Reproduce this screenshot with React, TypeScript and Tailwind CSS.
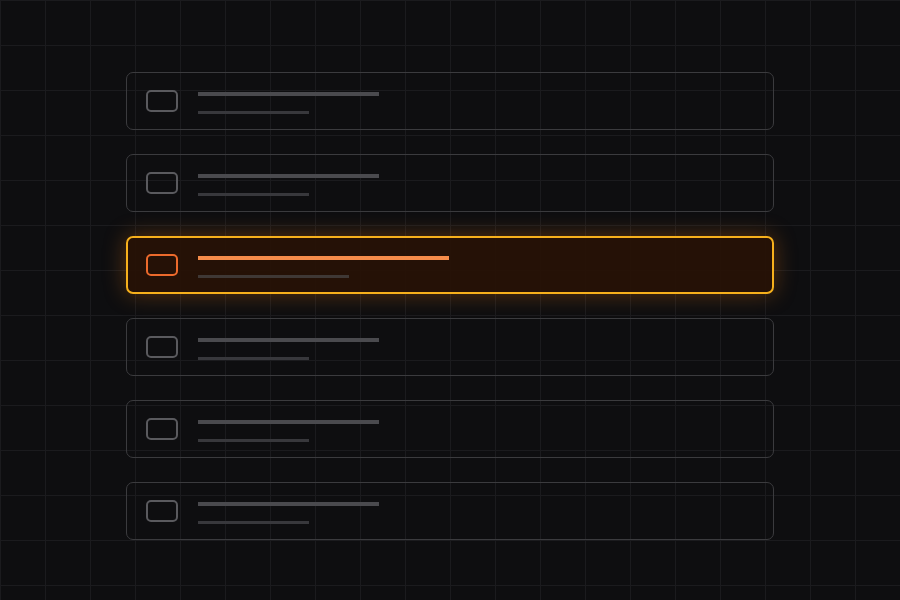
export default function App() {
  const rows = [0, 1, 2, 3, 4, 5];
  const active = 2;

  return (
    <div className="w-[900px] h-[600px] overflow-hidden bg-[#0e0e10] bg-[linear-gradient(to_right,#1b1b1e_1px,transparent_1px),linear-gradient(to_bottom,#1b1b1e_1px,transparent_1px)] bg-[size:45px_45px]">
      <div className="flex flex-col gap-[24px] pt-[72px] w-[648px] mx-auto">
        {rows.map((i) =>
          i === active ? (
            <div
              key={i}
              className="h-[58px] rounded-[7px] border-[2.5px] border-[#f6b01c] bg-[#271206]/95 shadow-[0_0_22px_rgba(234,120,20,0.35)] flex items-center px-[18px] gap-[20px]"
            >
              <div className="w-[32px] h-[22px] rounded-[5px] border-2 border-[#ec6a2c] shrink-0" />
              <div className="flex flex-col gap-[15px] pt-[4px]">
                <div className="w-[251px] h-[4px] bg-[#f58c4a]" />
                <div className="w-[151px] h-[3px] bg-[#3f3835]" />
              </div>
            </div>
          ) : (
            <div
              key={i}
              className="h-[58px] rounded-[7px] border-[1.5px] border-[#3b3b3e] bg-white/[0.005] flex items-center px-[19px] gap-[20px]"
            >
              <div className="w-[32px] h-[22px] rounded-[5px] border-2 border-[#5a5a5e] shrink-0" />
              <div className="flex flex-col gap-[15px] pt-[4px]">
                <div className="w-[181px] h-[4px] bg-[#4a4a4e]" />
                <div className="w-[111px] h-[3px] bg-[#38383c]" />
              </div>
            </div>
          )
        )}
      </div>
    </div>
  );
}
